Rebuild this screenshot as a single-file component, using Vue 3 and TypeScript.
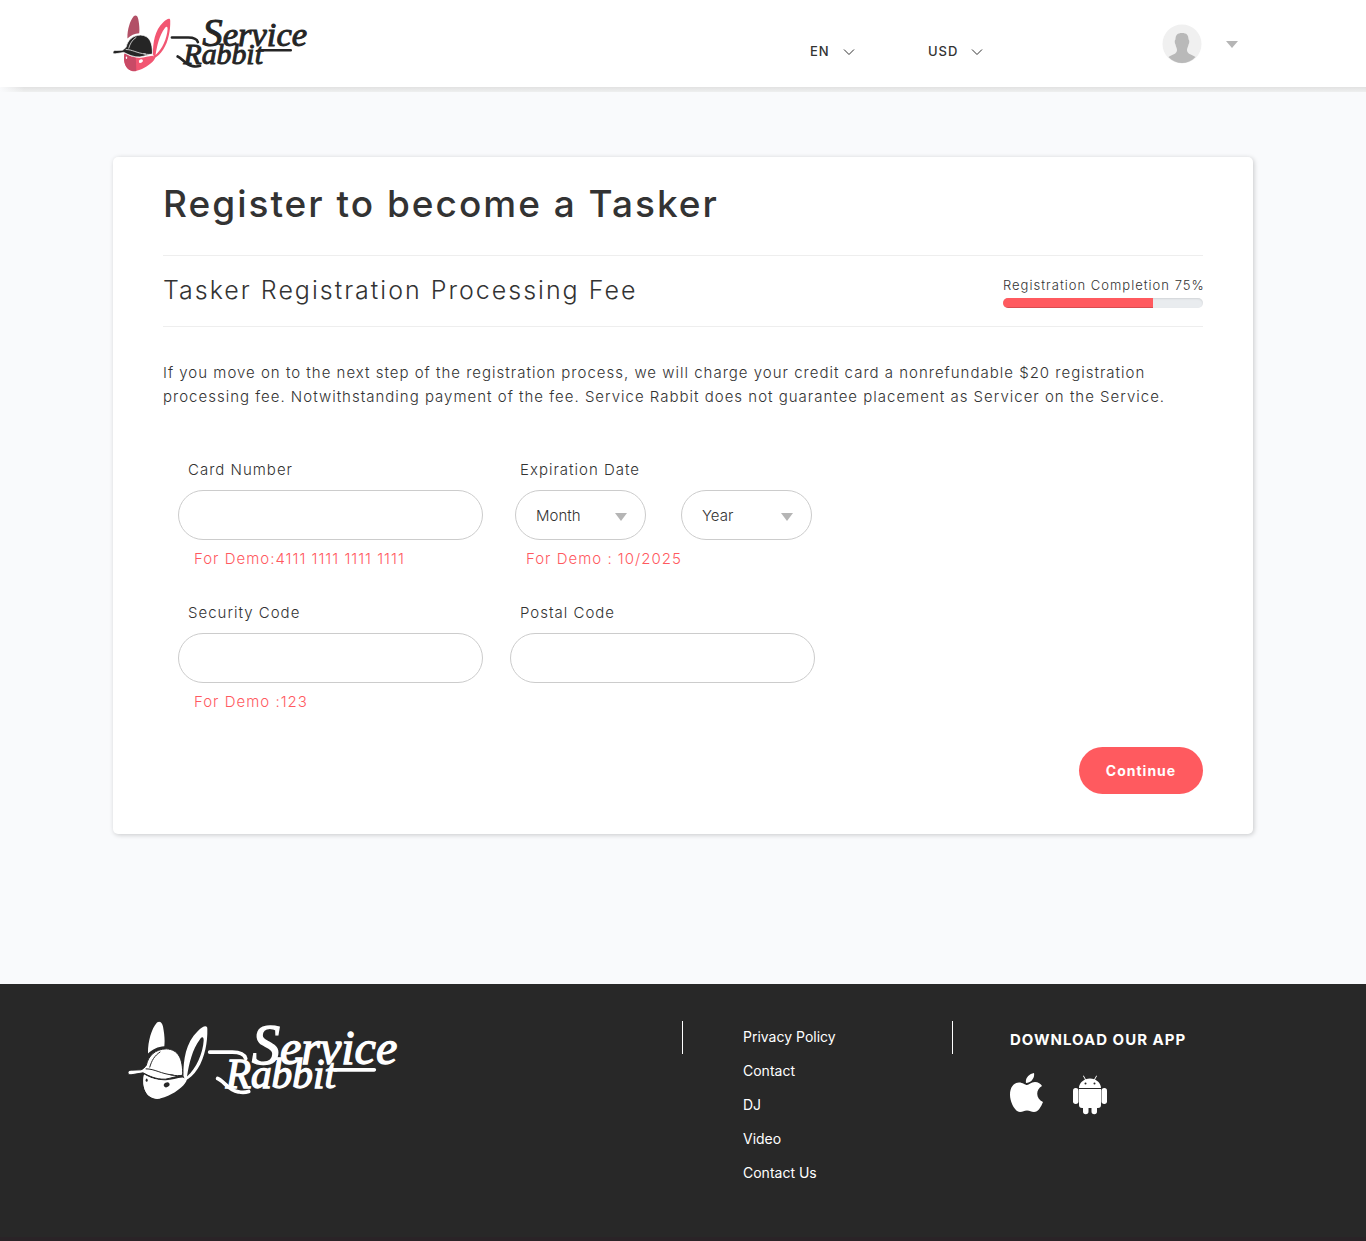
<script setup lang="ts">
import { ref } from 'vue'

const language = ref('EN')
const currency = ref('USD')
const month = ref('')
const year = ref('')
const progress = 75

const months: string[] = Array.from({ length: 12 }, (_, i) => String(i + 1).padStart(2, '0'))
const years: string[] = Array.from({ length: 10 }, (_, i) => String(2024 + i))
const links: string[] = ['Privacy Policy', 'Contact', 'DJ', 'Video', 'Contact Us']
</script>

<template>
  <div class="page">
    <svg class="sprite" aria-hidden="true">
      <symbol id="brand" viewBox="53 34 840 236">
        <path class="ear-left" d="M113 131C112 100 122 58 140 38C148 33 155 37 158 50C162 72 164 90 162 109C143 110 126 118 113 131Z" />
        <path class="ear-right" fill-rule="evenodd" d="M219 197C219 150 226 98 262 64C278 48 292 44 291 58C292 96 284 142 262 177C250 196 237 207 225 212ZM230 200C258 176 278 130 280 92C280 80 275 80 269 88C246 118 236 162 230 200Z" />
        <path class="face" d="M101 194C118 204 138 212 166 211C184 211 200 204 217 203L230 208C225 226 205 240 185 252C160 267 136 270 120 261C99 248 96 216 101 194Z" />
        <path class="face-shade" d="M101 194C114 202 130 208 148 211L150 266C138 269 128 266 120 261C99 248 96 216 101 194Z" />
        <ellipse class="eye" cx="109" cy="211" rx="3" ry="5" />
        <ellipse class="eye" cx="169" cy="225" rx="9" ry="7" transform="rotate(-30 169 225)" />
        <path class="cap" d="M53 188C53 183 58 181 64 181L92 180C98 178 104 172 108 166C114 138 134 118 168 117C204 119 218 146 217 197C200 198 184 205 165 208C136 209 116 198 98 189L62 195C56 195 53 192 53 188Z" />
        <path class="seam" d="M106 177C134 177 150 192 190 196M118 173C124 152 132 138 150 126M180 195C196 198 208 198 217 196" />
        <path class="swash" d="M298 127H366C390 127 402 133 406 146M322 206C342 214 352 240 384 246C396 249 406 248 415 245M672 180H792" />
      </symbol>
    </svg>

    <header class="topbar">
      <div class="container topbar-row">
        <a class="logo" href="#" aria-label="Service Rabbit">
          <svg viewBox="53 34 840 236">
            <use href="#brand" x="53" y="34" width="840" height="236" />
            <text class="word" x="424" y="162"><tspan class="initial">S</tspan><tspan class="upper">ervice</tspan></text>
            <text class="word lower" x="346" y="236">Rabbit</text>
          </svg>
        </a>
        <div class="pickers">
          <div class="picker picker-lang">
            <select v-model="language" aria-label="Language"><option>EN</option><option>FR</option></select>
            <svg class="chevron" viewBox="0 0 12 8"><path d="M1 1.500L6 6.500L11 1.500" /></svg>
          </div>
          <div class="picker picker-cur">
            <select v-model="currency" aria-label="Currency"><option>USD</option><option>EUR</option></select>
            <svg class="chevron" viewBox="0 0 12 8"><path d="M1 1.500L6 6.500L11 1.500" /></svg>
          </div>
        </div>
        <button class="account" type="button" aria-label="Account menu">
          <svg class="avatar" viewBox="0 0 40 40">
            <circle cx="20" cy="20" r="19.500" fill="#f0f0f0" />
            <path fill="#b9b9b9" d="M20 9C24.500 9 26.500 11 26.500 15.500C27.500 16 27.500 19 26.500 20.500C26 23 25 24 25 26C25 30 29 30 33.500 33C26 41 14 41 6.500 33C11 30 15 30 15 26C15 24 14 23 13.500 20.500C12.500 19 12.500 16 13.500 15.500C13.500 11 15.500 9 20 9Z" />
          </svg>
          <svg class="caret" viewBox="0 0 12 7"><path d="M0 0H12L6 7Z" /></svg>
        </button>
      </div>
    </header>

    <main class="container main">
      <section class="card">
        <h1>Register to become a Tasker</h1>
        <div class="step">
          <h2>Tasker Registration Processing Fee</h2>
          <div class="completion">
            <span id="completion-label">Registration Completion {{ progress }}%</span>
            <div class="track" role="progressbar" aria-labelledby="completion-label" :aria-valuenow="progress">
              <div class="bar" :style="{ width: progress + '%' }"></div>
            </div>
          </div>
        </div>
        <p class="intro">
          If you move on to the next step of the registration process, we will charge your credit card a nonrefundable $20 registration<br />
          processing fee. Notwithstanding payment of the fee. Service Rabbit does not guarantee placement as Servicer on the Service.
        </p>
        <form @submit.prevent>
          <div class="fields">
            <div class="field">
              <label for="card">Card Number</label>
              <input id="card" type="text" />
              <span class="hint">For Demo:4111 1111 1111 1111</span>
            </div>
            <div class="field">
              <label for="month">Expiration Date</label>
              <div class="dates">
                <div class="select">
                  <select id="month" v-model="month">
                    <option value="">Month</option>
                    <option v-for="m in months" :key="m">{{ m }}</option>
                  </select>
                  <svg class="caret" viewBox="0 0 12 8"><path d="M0 0H12L6 8Z" /></svg>
                </div>
                <div class="select">
                  <select v-model="year" aria-label="Expiration year">
                    <option value="">Year</option>
                    <option v-for="y in years" :key="y">{{ y }}</option>
                  </select>
                  <svg class="caret" viewBox="0 0 12 8"><path d="M0 0H12L6 8Z" /></svg>
                </div>
              </div>
              <span class="hint">For Demo : 10/2025</span>
            </div>
            <div class="field">
              <label for="cvv">Security Code</label>
              <input id="cvv" type="text" />
              <span class="hint">For Demo :123</span>
            </div>
            <div class="field">
              <label for="postal">Postal Code</label>
              <input id="postal" type="text" />
            </div>
          </div>
          <div class="actions"><button class="continue" type="submit">Continue</button></div>
        </form>
      </section>
    </main>

    <footer class="footer">
      <div class="container footer-row">
        <a class="footer-logo" href="#" aria-label="Service Rabbit">
          <svg viewBox="53 34 840 236">
            <use href="#brand" x="53" y="34" width="840" height="236" />
            <text class="word" x="424" y="162"><tspan class="initial">S</tspan><tspan class="upper">ervice</tspan></text>
            <text class="word lower" x="346" y="236">Rabbit</text>
          </svg>
        </a>
        <nav class="links">
          <a v-for="link in links" :key="link" href="#">{{ link }}</a>
        </nav>
        <div class="apps">
          <h3>DOWNLOAD OUR APP</h3>
          <div class="stores">
            <a href="#" aria-label="App Store">
              <svg class="store" viewBox="0 0 34 40">
                <path d="M24 0C25 5 21 10 16 10C15 5 19 1 24 0ZM17 12C19 12 21 9 25 9C28 9 31 11 32 13C25 17 26 26 33 29C31 34 28 39 24 39C21 39 20 37.500 17 37.500C14 37.500 13 39 10 39C5 39 0 29 0 22C0 14 4 9.500 9 9.500C13 9.500 15 12 17 12Z" />
              </svg>
            </a>
            <a href="#" aria-label="Google Play">
              <svg class="store" viewBox="0 0 34 40">
                <path fill-rule="evenodd" d="M6 13C6 9 9 6 12 4.500L10 1L10.700 0.600L12.800 4.200C15.500 3.100 18.500 3.100 21.200 4.200L23.300 0.600L24 1L22 4.500C25 6 28 9 28 13ZM11.500 8.500a1 1 0 1 0 2 0a1 1 0 1 0-2 0ZM20.500 8.500a1 1 0 1 0 2 0a1 1 0 1 0-2 0Z" />
                <path d="M6 14H28V30C28 32 27 33 25 33H24V36.500a2.500 2.500 0 0 1-5.500 0V33H15.500V36.500a2.500 2.500 0 0 1-5.500 0V33H9C7 33 6 32 6 30Z" />
                <rect x="0" y="13" width="5.500" height="16" rx="2.700" />
                <rect x="28.500" y="13" width="5.500" height="16" rx="2.700" />
              </svg>
            </a>
          </div>
        </div>
      </div>
    </footer>
  </div>
</template>

<style>
body {
  margin: 0;
}
</style>

<style scoped>
* {
  box-sizing: border-box;
}
.page {
  display: flex;
  flex-direction: column;
  min-height: 100vh;
  background: #f9fafc;
  color: #333;
  font-family: Inter, 'Liberation Sans', sans-serif;
  font-size: 15px;
  font-weight: 300;
  letter-spacing: 1px;
}
.sprite {
  position: absolute;
  width: 0;
  height: 0;
}
.container {
  width: 100%;
  max-width: 1140px;
  margin: 0 auto;
}
select,
input,
button {
  font: inherit;
  color: inherit;
  letter-spacing: inherit;
}
a {
  color: inherit;
  text-decoration: none;
}

.ear-left { fill: var(--ear); }
.ear-right,
.face { fill: var(--face); }
.face-shade { fill: var(--shade); }
.eye { fill: var(--paper); }
.cap {
  fill: var(--ink);
  stroke: var(--paper);
  stroke-width: 3;
}
.seam {
  fill: none;
  stroke: var(--paper);
  stroke-width: 3;
}
.swash {
  fill: none;
  stroke: var(--ink);
  stroke-width: 11;
  stroke-linecap: round;
}
.word {
  fill: var(--ink);
  stroke: var(--ink);
  stroke-width: 4;
  font-family: 'Liberation Serif', serif;
  font-style: italic;
  font-weight: 400;
  letter-spacing: 0;
}
.initial { font-size: 170px; }
.upper { font-size: 144px; }
.lower { font-size: 124px; }

.topbar {
  position: relative;
  background: #fff;
}
.topbar::after {
  content: '';
  position: absolute;
  left: 0;
  right: 0;
  top: 100%;
  height: 5px;
  background:
    linear-gradient(to right, #f9fafc, rgba(249, 250, 252, 0) 24px),
    linear-gradient(#e2e2e2, #eeefef);
}
.topbar-row {
  display: flex;
  align-items: flex-start;
  height: 87px;
}
.logo {
  --ear: #b25066;
  --face: #f25672;
  --shade: #c94a66;
  --ink: #252525;
  --paper: #fff;
  margin-top: 15px;
}
.logo svg {
  display: block;
  width: 202px;
  height: 57px;
  overflow: visible;
}
.pickers {
  display: flex;
  gap: 73px;
  margin: 41px 179px 0 auto;
}
.picker {
  position: relative;
  height: 20px;
}
.picker select {
  display: block;
  width: 100%;
  height: 20px;
  padding: 0;
  border: 0;
  background: none;
  appearance: none;
  font-size: 13px;
  font-weight: 500;
}
.picker-lang { width: 45px; }
.picker-cur { width: 55px; }
.chevron {
  position: absolute;
  right: 0;
  top: 7px;
  width: 12px;
  height: 8px;
  fill: none;
  stroke: #333;
  pointer-events: none;
}
.account {
  display: flex;
  align-items: center;
  gap: 24px;
  margin: 24px 15px 0 0;
  padding: 0;
  border: 0;
  background: none;
}
.avatar {
  width: 40px;
  height: 40px;
}
.caret {
  width: 12px;
  height: 7px;
  fill: #b5b5b5;
}

.main {
  padding: 70px 0 150px;
}
.card {
  padding: 27px 50px 40px;
  border-radius: 5px;
  background: #fff;
  box-shadow: 1px 1px 5px rgba(0, 0, 0, 0.2);
}
h1,
h2,
h3,
p {
  margin: 0;
}
h1 {
  padding-bottom: 31px;
  border-bottom: 1px solid #eee;
  font-size: 37px;
  font-weight: 500;
  line-height: 40px;
  letter-spacing: 2px;
}
.step {
  display: flex;
  align-items: center;
  justify-content: space-between;
  min-height: 71px;
  border-bottom: 1px solid #eee;
}
h2 {
  padding-bottom: 2px;
  font-size: 25px;
  font-weight: 300;
  line-height: 32px;
  letter-spacing: 2px;
}
.completion {
  width: 200px;
  padding-top: 2px;
  font-size: 13px;
  line-height: 16px;
  white-space: nowrap;
}
.track {
  height: 10px;
  margin-top: 5px;
  overflow: hidden;
  border-radius: 5px;
  background: #e9ecef;
  box-shadow: inset 0 1px 2px rgba(0, 0, 0, 0.1);
}
.bar {
  height: 100%;
  background: #ff5a5f;
  box-shadow: inset 0 -1px 0 rgba(0, 0, 0, 0.15);
}
.intro {
  margin-top: 34px;
  line-height: 24px;
}
.fields {
  display: grid;
  grid-template-columns: repeat(2, minmax(0, 305px));
  gap: 34px 27px;
  margin-top: 51px;
  padding: 0 15px;
}
.field label {
  display: block;
  margin-bottom: 10px;
  padding-left: 10px;
  line-height: 20px;
}
.field input,
.select select {
  display: block;
  width: 100%;
  height: 50px;
  padding: 0 20px;
  border: 1px solid #ccc;
  border-radius: 25px;
  background: #fff;
  appearance: none;
}
.dates {
  display: flex;
  gap: 35px;
  padding: 0 3px 0 5px;
}
.select {
  position: relative;
  flex: 1;
}
.select select {
  letter-spacing: 0;
}
.select .caret {
  position: absolute;
  right: 19px;
  top: 23px;
  height: 8px;
  pointer-events: none;
}
.hint {
  display: block;
  margin-top: 9px;
  padding-left: 16px;
  color: #ff5a5f;
  line-height: 20px;
}
.actions {
  display: flex;
  justify-content: flex-end;
  margin-top: 35px;
}
.continue {
  width: 124px;
  height: 47px;
  border: 0;
  border-radius: 24px;
  background: #ff5a5f;
  color: #fff;
  font-size: 14px;
  font-weight: 700;
}

.footer {
  flex: 1;
  border-bottom: 4px solid #2a2327;
  background: #282828;
  color: #fff;
  font-size: 14px;
  letter-spacing: 0;
}
.footer-row {
  display: flex;
  align-items: flex-start;
  padding: 37px 0 49px;
}
.footer-logo {
  --ear: #fff;
  --face: #fff;
  --shade: #fff;
  --ink: #fff;
  --paper: #282828;
  flex: 1;
  padding-left: 15px;
}
.footer-logo svg {
  display: block;
  width: 280px;
  height: 79px;
  overflow: visible;
}
.links,
.apps {
  position: relative;
}
.links::before,
.apps::before {
  content: '';
  position: absolute;
  left: 0;
  top: 0;
  width: 1px;
  height: 33px;
  background: #fff;
}
.links {
  display: flex;
  flex-direction: column;
  gap: 14px;
  width: 270px;
  padding: 6px 0 0 61px;
  font-weight: 400;
  line-height: 20px;
}
.apps {
  width: 301px;
  padding: 9px 0 0 58px;
}
h3 {
  font-size: 15px;
  font-weight: 700;
  line-height: 20px;
  letter-spacing: 1px;
}
.stores {
  display: flex;
  gap: 29px;
  margin-top: 23px;
}
.store {
  display: block;
  width: 34px;
  height: 40px;
  fill: #fff;
}
.stores a + a {
  padding-top: 2px;
}
</style>
